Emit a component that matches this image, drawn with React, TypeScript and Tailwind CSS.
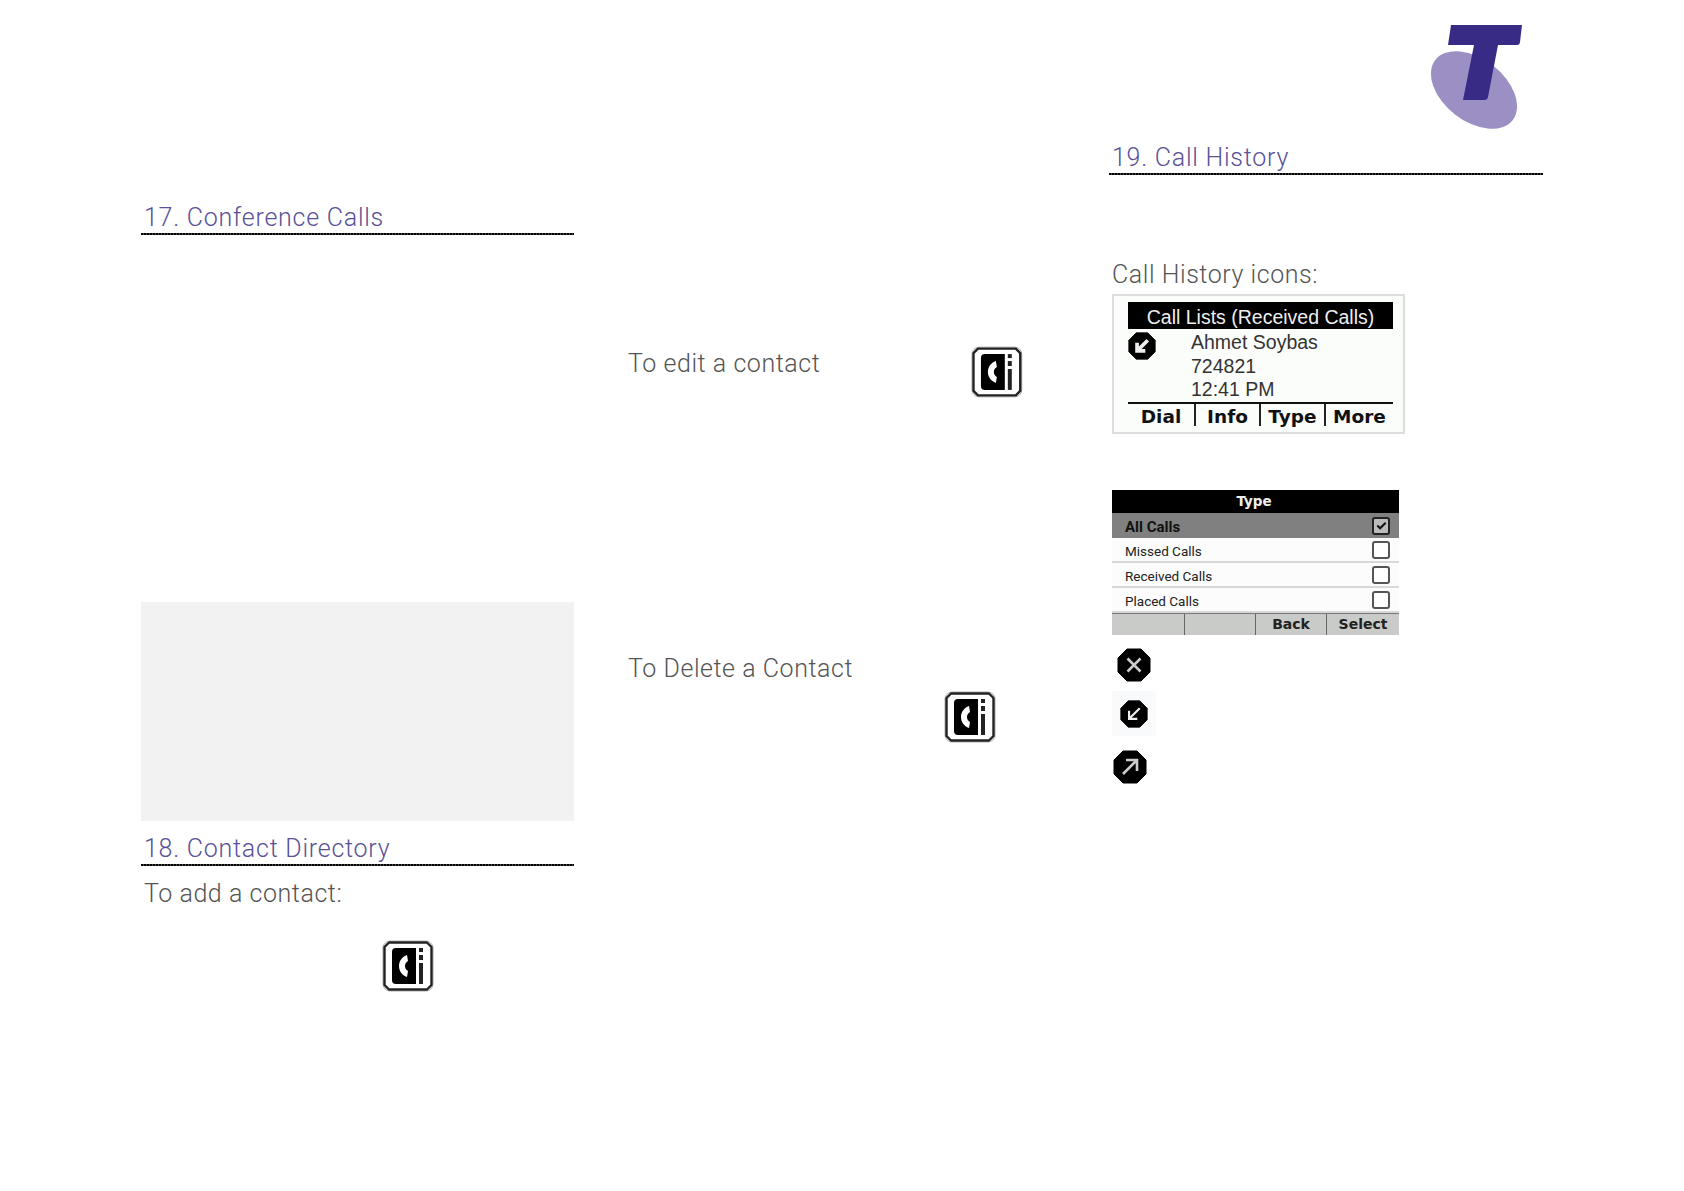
const BODY_FONT = "font-['Roboto',sans-serif] font-light"

function Heading({ children, className = "" }: { children: React.ReactNode; className?: string }) {
  return (
    <div className={`h-[36px] flex flex-col ${className}`}>
      <div className={`h-[34px] pl-[3px] pt-[2px] text-[25px] leading-[34px] tracking-[0.03em] text-[#5a5197] ${BODY_FONT}`}>{children}</div>
      <div className="h-[2px] bg-[repeating-linear-gradient(90deg,#000_0_2px,#444_2px_3px)]" />
    </div>
  )
}

function BodyText({ children, className = "" }: { children: React.ReactNode; className?: string }) {
  return <p className={`text-[25px] leading-[32px] tracking-[0.022em] text-[#555] ${BODY_FONT} ${className}`}>{children}</p>
}

function DirectoryIcon({ className = "" }: { className?: string }) {
  return (
    <svg viewBox="0 0 52 52" className={`block w-[52px] h-[52px] ${className}`}>
      <rect x="1" y="1" width="50" height="50" rx="7" fill="#fff" stroke="#aaa" strokeWidth="1" />
      <path d="M7 2.500h38l4.500 4.500v38L45 49.500H7L2.500 45V7z" fill="#fff" stroke="#222" strokeWidth="2.400" strokeLinejoin="round" />
      <path d="M14 8h20v36H14a4 4 0 0 1-4-4V12a4 4 0 0 1 4-4z" fill="#000" />
      <path d="M25 15c-5 2-8 6-8 11s3 9 8 11l1-6c-2-1-3-3-3-5s1-4 3-5z" fill="#fff" />
      <rect x="37" y="8" width="4" height="4" fill="#222" />
      <rect x="37" y="15" width="4" height="5" fill="#222" />
      <rect x="37" y="23" width="4" height="21" fill="#222" />
    </svg>
  )
}

function StatusIcon({ kind, className = "", heavy = false }: { kind: "x" | "in" | "out"; className?: string; heavy?: boolean }) {
  return (
    <svg viewBox="0 0 34 34" className={`block ${className}`}>
      <path d="M10 1h14l9 9v14l-9 9H10l-9-9V10z" fill="#000" stroke="#000" strokeLinejoin="round" strokeWidth="1" />
      {kind === "x" && <path d="M10.500 10.500l13 13M23.500 10.500l-13 13" stroke="#ccc" strokeWidth="2.600" />}
      {kind === "in" && <path d="M24 10L12 22M11 13v10h10" fill="none" stroke="#eee" strokeWidth={heavy ? 4.500 : 2.600} />}
      {kind === "out" && <path d="M10 24L23 11M13 10h11v11" fill="none" stroke="#ccc" strokeWidth="2.600" />}
    </svg>
  )
}

function TelstraLogo() {
  return (
    <svg viewBox="0 0 94 106" className="block w-[94px] h-[106px]">
      <ellipse cx="45" cy="66" rx="49" ry="31" transform="rotate(38 45 66)" fill="#9b8fc4" />
      <path d="M22 1h71l-2 17c-.3 2-1 3-3 3H69L59 73c-.4 2-1.500 3-3.500 3H34l11-55H19z" fill="#372b85" />
    </svg>
  )
}

function CallListScreen() {
  return (
    <div className="w-[293px] h-[140px] border-2 border-[#ddd] bg-[#fbfdfb] pl-[14px] pr-[10px] pt-[6px] flex flex-col font-['Liberation_Sans',sans-serif]">
      <div className="h-[27px] bg-black text-[#eee] text-[19.500px] leading-[27px] pt-[2px] text-center">Call Lists (Received Calls)</div>
      <div className="flex h-[73px]">
        <StatusIcon kind="in" heavy className="w-[28px] h-[28px] mt-[3px]" />
        <div className="ml-[35px] text-[19.500px] leading-[23.500px] text-[#333] pt-[2px]">
          <div>Ahmet Soybas</div>
          <div>724821</div>
          <div>12:41 PM</div>
        </div>
      </div>
      <div className="flex h-[24px] border-t-2 border-[#111] font-['DejaVu_Sans',sans-serif] font-bold text-[18.500px] leading-[26px] text-[#111] text-center">
        <div className="w-[66px]">Dial</div>
        <div className="w-[65px] border-l-2 border-[#222]">Info</div>
        <div className="w-[65px] border-l-2 border-[#222]">Type</div>
        <div className="flex-1 border-l-2 border-[#222]">More</div>
      </div>
    </div>
  )
}

function TypeRow({ label, active = false }: { label: string; active?: boolean }) {
  return (
    <div className={`h-[25px] flex items-center justify-between pl-[13px] pr-[9px] ${active ? "bg-[#808080] font-bold text-[15px] text-[#111]" : "bg-[#fbfcfb] border-b-2 border-[#d8d8d8] text-[13.500px] text-[#222]"}`}>
      <span className="pt-[3px]">{label}</span>
      <span className={`w-[18px] h-[18px] rounded-[3px] border-2 flex items-center justify-center ${active ? "border-[#222] bg-[#bbb]" : "border-[#555] bg-white"}`}>
        {active && (
          <svg viewBox="0 0 14 14" className="w-[13px] h-[13px]">
            <path d="M2.500 7l3 3 6-6" fill="none" stroke="#111" strokeWidth="2.200" />
          </svg>
        )}
      </span>
    </div>
  )
}

function TypeScreen() {
  return (
    <div className="w-[287px] flex flex-col font-['Roboto',sans-serif]">
      <div className="h-[23px] bg-black text-[#eee] font-['DejaVu_Sans',sans-serif] font-bold text-[13.500px] leading-[23px] text-center pr-[3px]">Type</div>
      <TypeRow label="All Calls" active />
      <TypeRow label="Missed Calls" />
      <TypeRow label="Received Calls" />
      <TypeRow label="Placed Calls" />
      <div className="flex h-[22px] bg-[#c9cbc9] border-t border-[#777] font-['DejaVu_Sans',sans-serif] font-bold text-[14px] leading-[21px] text-[#222] text-center">
        <div className="w-[72px]" />
        <div className="w-[71px] border-l border-[#666]" />
        <div className="w-[71px] border-l border-[#666]">Back</div>
        <div className="flex-1 border-l border-[#666]">Select</div>
      </div>
    </div>
  )
}

export default function App() {
  return (
    <div className="w-[1684px] h-[1191px] bg-white flex overflow-hidden">
      {/* left column */}
      <div className="w-[433px] ml-[141px] pt-[199px] flex flex-col">
        <Heading>17. Conference Calls</Heading>
        <div className="mt-[367px] h-[219px] bg-[#f2f2f2]" />
        <Heading className="mt-[9px]">18. Contact Directory</Heading>
        <BodyText className="pl-[3px] mt-[12px]">To add a contact:</BodyText>
        <DirectoryIcon className="ml-[241px] mt-[30px]" />
      </div>

      {/* middle column */}
      <div className="w-[396px] ml-[53px] flex flex-col">
        <div className="flex items-start pt-[346px] pl-[1px]">
          <BodyText className="w-[345px] mt-[2px]">To edit a contact</BodyText>
          <DirectoryIcon />
        </div>
        <BodyText className="pl-[1px] mt-[255px]">To Delete a Contact</BodyText>
        <DirectoryIcon className="ml-[317px] mt-[6px]" />
      </div>

      {/* right column */}
      <div className="w-[434px] ml-[86px] pt-[24px] flex flex-col">
        <div className="flex justify-end pr-[20px] h-[106px]">
          <TelstraLogo />
        </div>
        <Heading className="mt-[9px]">19. Call History</Heading>
        <BodyText className="pl-[3px] mt-[84px]">Call History icons:</BodyText>
        <div className="pl-[3px] mt-[3px]">
          <CallListScreen />
        </div>
        <div className="pl-[3px] mt-[56px]">
          <TypeScreen />
        </div>
        <StatusIcon kind="x" className="w-[34px] h-[34px] ml-[8px] mt-[13px]" />
        <div className="ml-[3px] mt-[9px] w-[44px] h-[45px] bg-[#f8fafc] flex items-center justify-center">
          <StatusIcon kind="in" className="w-[28px] h-[28px]" />
        </div>
        <StatusIcon kind="out" className="w-[34px] h-[34px] ml-[4px] mt-[14px]" />
      </div>
    </div>
  )
}
